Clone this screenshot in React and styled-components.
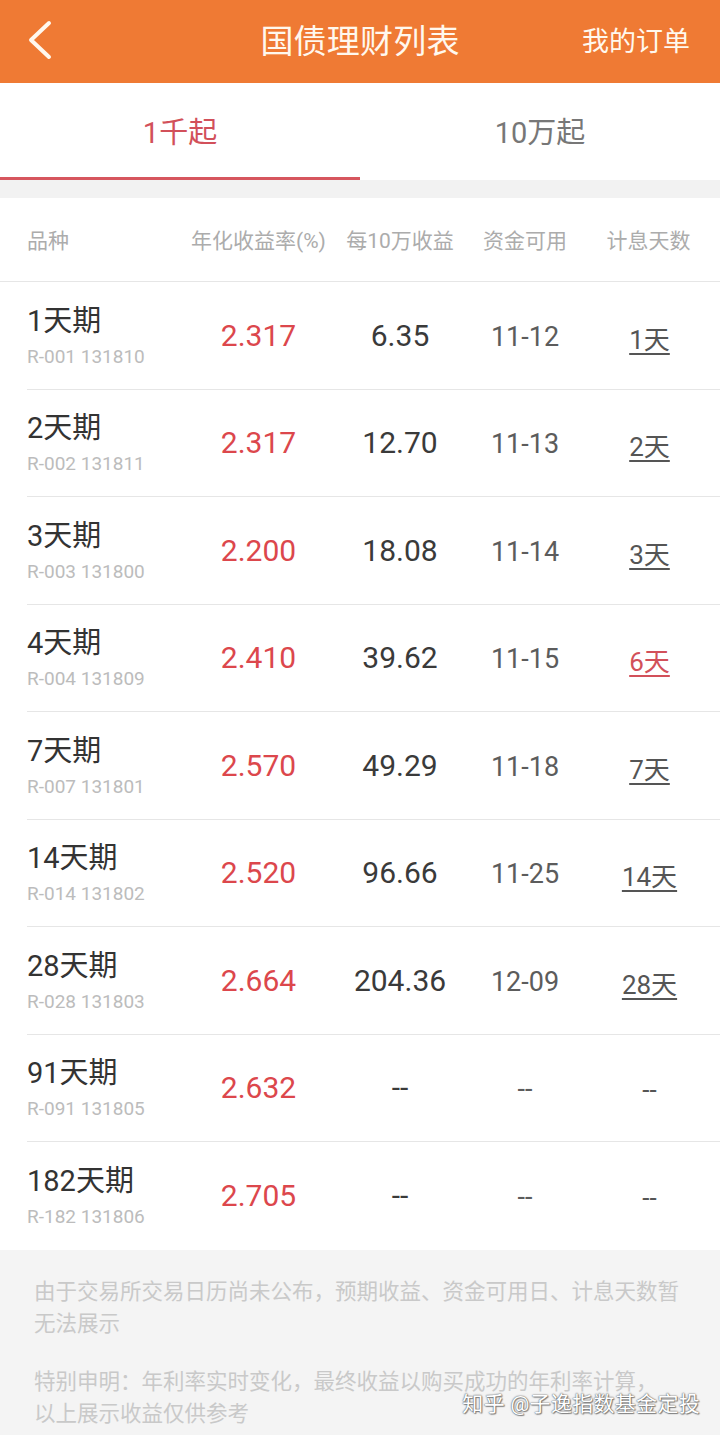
import React from "react";
import styled, { createGlobalStyle } from "styled-components";

const Global = createGlobalStyle`
  html, body { margin: 0; padding: 0; background: #f4f4f4; }
  body { font-family: Roboto, "Noto Sans CJK SC", sans-serif; }
  * { box-sizing: border-box; }
`;

const Page = styled.div`
  position: relative;
  width: 720px;
  height: 1435px;
  background: #f4f4f4;
  overflow: hidden;
`;

const TopBar = styled.header`
  height: 83px;
  background: #ef7a34;
  display: grid;
  grid-template-columns: 160px 1fr 160px;
  align-items: center;
  color: #fff8ee;
`;

const BackBtn = styled.div`
  padding-left: 26px;
  padding-bottom: 4px;
  display: flex;
  align-items: center;
`;

const Title = styled.h1`
  margin: 0;
  text-align: center;
  font-size: 33px;
  font-weight: 400;
  letter-spacing: 0.2px;
  padding-bottom: 6px;
`;

const RightLink = styled.div`
  font-size: 27px;
  text-align: right;
  padding-right: 30px;
  white-space: nowrap;
  padding-bottom: 4px;
`;

const Tabs = styled.nav`
  display: flex;
  background: #fff;
  height: 97px;
`;

const Tab = styled.div`
  flex: 1;
  display: flex;
  align-items: center;
  justify-content: center;
  font-size: 29px;
  color: ${(p) => (p.$active ? "#d2505a" : "#777")};
  border-bottom: 3px solid ${(p) => (p.$active ? "#d6565e" : "transparent")};
  position: relative;
  & + &::before {
    content: "";
    position: absolute;
    left: -1px;
    top: 25px;
    height: 47px;
    width: 1px;
    background: #ececec;
  }
`;

const Gap = styled.div`
  height: 18px;
  background: #f2f2f2;
`;

const Table = styled.section`
  background: #fff;
`;

const cols = "163px 137px 146px 104px 1fr";

const HeadRow = styled.div`
  display: grid;
  grid-template-columns: ${cols};
  padding-left: 27px;
  height: 84px;
  align-items: center;
  border-bottom: 1px solid #e6e6e6;
  font-size: 21px;
  color: #acacac;
`;

const HeadCell = styled.div`
  text-align: ${(p) => (p.$left ? "left" : "center")};
  white-space: nowrap;
  padding-bottom: 2px;
`;

const RowWrap = styled.div`
  padding-left: 27px;
`;

const Row = styled.div`
  display: grid;
  grid-template-columns: ${cols};
  align-items: center;
  height: 107.5px;
  border-bottom: ${(p) => (p.$last ? "none" : "1px solid #e6e6e6")};
`;

const NameCell = styled.div`
  display: flex;
  flex-direction: column;
  padding-top: 2px;
`;

const Name = styled.div`
  font-size: 29px;
  color: #333;
  line-height: 38px;
`;

const Code = styled.div`
  font-size: 19px;
  color: #bcbcbc;
  line-height: 28px;
  margin-top: 3px;
`;

const Rate = styled.div`
  text-align: center;
  font-size: 30px;
  color: #dc474c;
`;

const Value = styled.div`
  text-align: center;
  font-size: 30px;
  color: #3a3a3a;
`;

const DateCell = styled.div`
  text-align: center;
  font-size: 27px;
  color: #5c5c5c;
  padding-top: 3px;
`;

const Days = styled.div`
  text-align: center;
  font-size: 26px;
  color: ${(p) => (p.$red ? "#d2505a" : "#555")};
  text-decoration: ${(p) => (p.$plain ? "none" : "underline")};
  text-underline-offset: 4px;
  text-decoration-thickness: 1.5px;
  padding-top: 4px;
  padding-left: 2px;
`;

const Footer = styled.footer`
  padding: 26px 34px 40px 34px;
  color: #c9c9c9;
  font-size: 21.5px;
  line-height: 32px;
`;

const Note = styled.p`
  margin: 0 0 26px;
  width: 650px;
`;

const Watermark = styled.div`
  position: absolute;
  right: 20px;
  bottom: 18px;
  font-size: 21px;
  color: #fff;
  letter-spacing: 0.3px;
  text-shadow: 0 0 1px #555, 0 0 2px #777, 1px 1px 1px #888;
  white-space: nowrap;
`;

const rows = [
  ["1天期", "R-001 131810", "2.317", "6.35", "11-12", "1天"],
  ["2天期", "R-002 131811", "2.317", "12.70", "11-13", "2天"],
  ["3天期", "R-003 131800", "2.200", "18.08", "11-14", "3天"],
  ["4天期", "R-004 131809", "2.410", "39.62", "11-15", "6天", true],
  ["7天期", "R-007 131801", "2.570", "49.29", "11-18", "7天"],
  ["14天期", "R-014 131802", "2.520", "96.66", "11-25", "14天"],
  ["28天期", "R-028 131803", "2.664", "204.36", "12-09", "28天"],
  ["91天期", "R-091 131805", "2.632", "--", "--", "--"],
  ["182天期", "R-182 131806", "2.705", "--", "--", "--"],
];

export default function App() {
  return (
    <Page>
      <Global />
      <TopBar>
        <BackBtn>
          <svg width="28" height="40" viewBox="0 0 28 40">
            <polyline
              points="23,3 5,20 23,37"
              fill="none"
              stroke="#fff8ee"
              strokeWidth="4"
              strokeLinecap="round"
              strokeLinejoin="round"
            />
          </svg>
        </BackBtn>
        <Title>国债理财列表</Title>
        <RightLink>我的订单</RightLink>
      </TopBar>
      <Tabs>
        <Tab $active>1千起</Tab>
        <Tab>10万起</Tab>
      </Tabs>
      <Gap />
      <Table>
        <HeadRow>
          <HeadCell $left>品种</HeadCell>
          <HeadCell>年化收益率(%)</HeadCell>
          <HeadCell>每10万收益</HeadCell>
          <HeadCell>资金可用</HeadCell>
          <HeadCell>计息天数</HeadCell>
        </HeadRow>
        <RowWrap>
          {rows.map((r, i) => {
            const plain = r[5] === "--";
            return (
              <Row key={r[1]} $last={i === rows.length - 1}>
                <NameCell>
                  <Name>{r[0]}</Name>
                  <Code>{r[1]}</Code>
                </NameCell>
                <Rate>{r[2]}</Rate>
                <Value>{r[3]}</Value>
                <DateCell>{r[4]}</DateCell>
                <Days $red={r[6]} $plain={plain}>
                  {r[5]}
                </Days>
              </Row>
            );
          })}
        </RowWrap>
      </Table>
      <Footer>
        <Note>
          由于交易所交易日历尚未公布，预期收益、资金可用日、计息天数暂无法展示
        </Note>
        <Note>
          特别申明：年利率实时变化，最终收益以购买成功的年利率计算，
          <br />
          以上展示收益仅供参考
        </Note>
      </Footer>
      <Watermark>知乎 @子逸指数基金定投</Watermark>
    </Page>
  );
}
